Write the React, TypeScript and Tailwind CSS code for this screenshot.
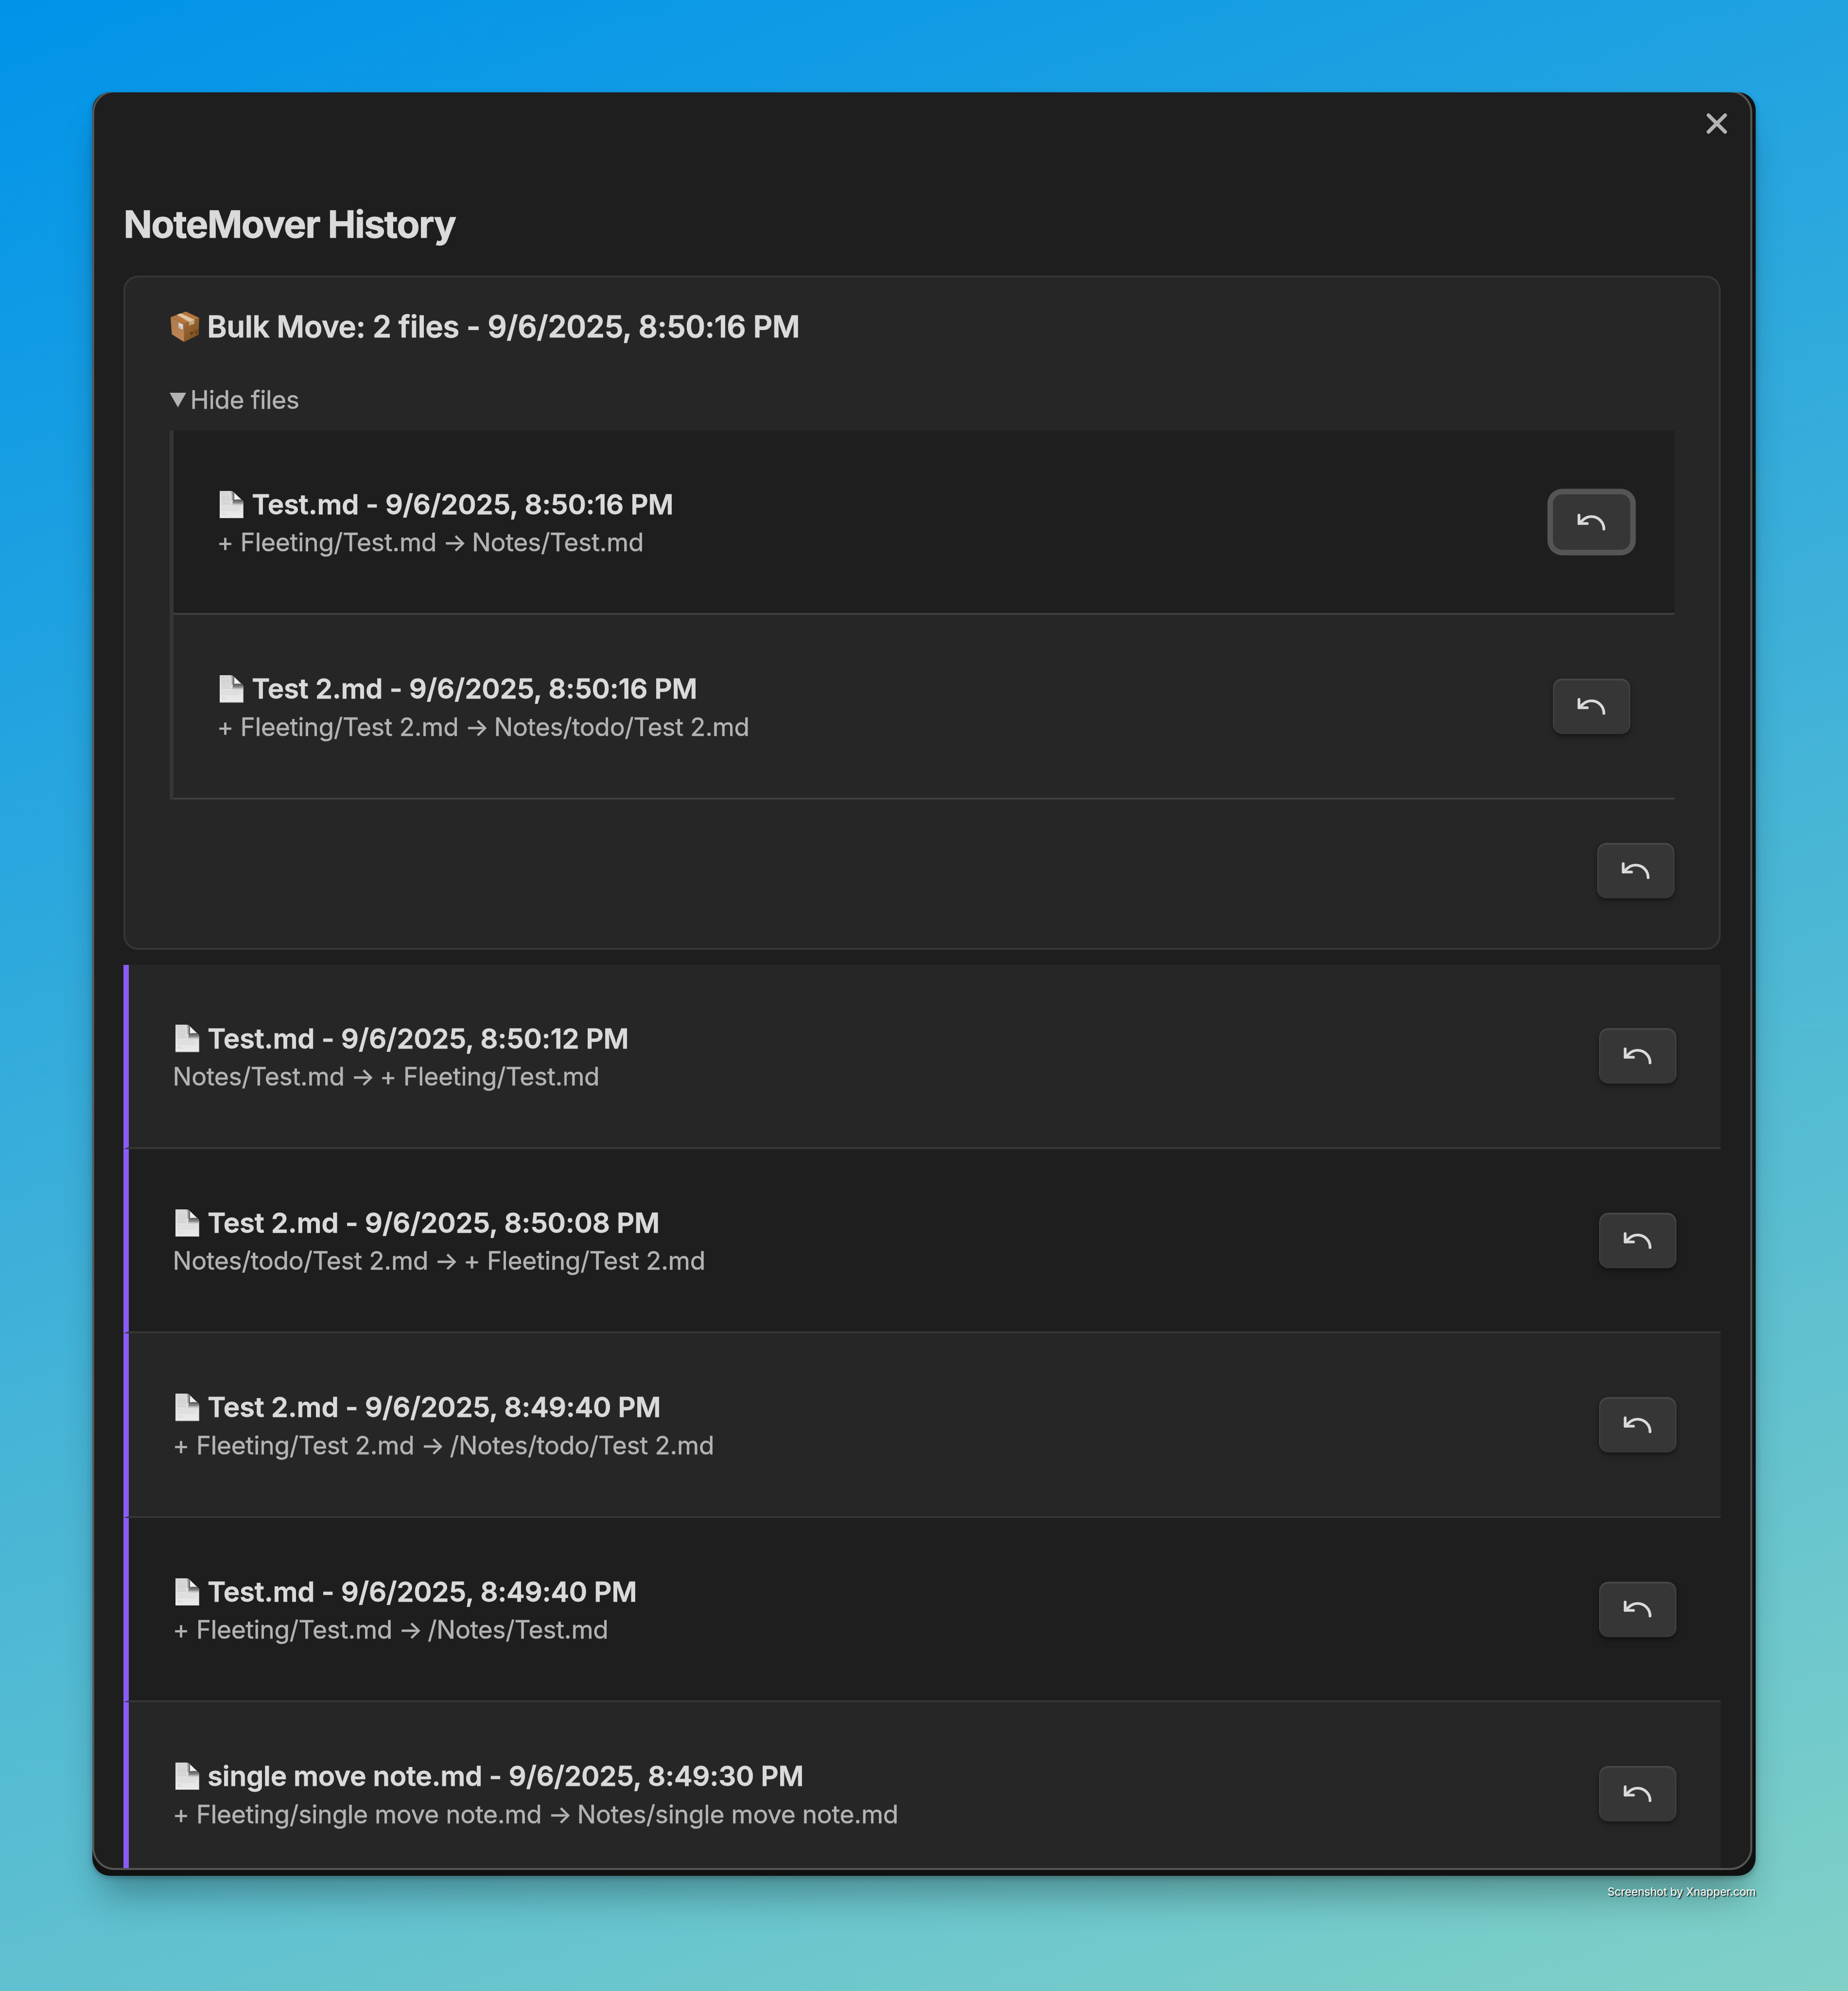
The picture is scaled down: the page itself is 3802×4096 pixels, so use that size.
import type { ReactNode } from "react";

type Move = { name: string; time: string; from: string; to: string };

const bulkFiles: Move[] = [
  { name: "Test.md", time: "9/6/2025, 8:50:16 PM", from: "+ Fleeting/Test.md", to: "Notes/Test.md" },
  { name: "Test 2.md", time: "9/6/2025, 8:50:16 PM", from: "+ Fleeting/Test 2.md", to: "Notes/todo/Test 2.md" },
];

const history: Move[] = [
  { name: "Test.md", time: "9/6/2025, 8:50:12 PM", from: "Notes/Test.md", to: "+ Fleeting/Test.md" },
  { name: "Test 2.md", time: "9/6/2025, 8:50:08 PM", from: "Notes/todo/Test 2.md", to: "+ Fleeting/Test 2.md" },
  { name: "Test 2.md", time: "9/6/2025, 8:49:40 PM", from: "+ Fleeting/Test 2.md", to: "/Notes/todo/Test 2.md" },
  { name: "Test.md", time: "9/6/2025, 8:49:40 PM", from: "+ Fleeting/Test.md", to: "/Notes/Test.md" },
  {
    name: "single move note.md",
    time: "9/6/2025, 8:49:30 PM",
    from: "+ Fleeting/single move note.md",
    to: "Notes/single move note.md",
  },
];

function UndoIcon() {
  return (
    <svg
      viewBox="0 0 24 24"
      className="size-[68.3px]"
      fill="none"
      stroke="currentColor"
      strokeWidth="2"
      strokeLinecap="round"
      strokeLinejoin="round"
    >
      <path d="M3 7v6h6" />
      <path d="M21 17a9 9 0 0 0-9-9 9 9 0 0 0-6 2.3L3 13" />
    </svg>
  );
}

function UndoButton({ focused = false }: { focused?: boolean }) {
  const shadow = focused
    ? "shadow-[0_0_0_11.4px_#555555]"
    : "shadow-[inset_0_1.9px_1.9px_1.9px_rgba(255,255,255,0.09),0_7.6px_15.2px_rgba(0,0,0,0.15),0_3.8px_5.7px_rgba(0,0,0,0.1),0_3.8px_7.6px_rgba(0,0,0,0.2)]";
  return (
    <button
      aria-label="Undo"
      className={`flex h-[113.8px] w-[159.4px] shrink-0 items-center justify-center rounded-[19px] bg-[#363636] text-[#dadada] ${shadow}`}
    >
      <UndoIcon />
    </button>
  );
}

function PackageIcon() {
  return (
    <svg viewBox="30 42 186 198" className="h-[62.6px] w-[58.8px]" role="img" aria-label="Package">
      <defs>
        <linearGradient id="box-left" x1="0" y1="0" x2="0.3" y2="1">
          <stop offset="0" stopColor="#b07a4c" />
          <stop offset="1" stopColor="#bd8455" />
        </linearGradient>
        <linearGradient id="box-right" x1="0" y1="0" x2="0.6" y2="1">
          <stop offset="0" stopColor="#a16a38" />
          <stop offset="1" stopColor="#80541f" />
        </linearGradient>
      </defs>
      <path d="M130 42L216 82L118 122L30 78Z" fill="#b5763f" />
      <path d="M30 78L118 122L118 240L38 190Z" fill="url(#box-left)" />
      <path d="M216 82L118 122L118 240L212 192Z" fill="url(#box-right)" />
      <path d="M70 62L98 54L186 95L150 110Z" fill="#d9c09c" />
      <path d="M84 58L168 102" stroke="#e6d3b5" strokeWidth="5" />
      <path d="M150 109L186 94L184 122L173 127L168 124L150 136Z" fill="#c3a883" />
      <path d="M82 113L109 127L109 159L82 147Z" fill="#d9dcdf" />
      <path d="M86 134L97 140L97 150L86 145Z" fill="#a3a7ab" />
      <path d="M155 178L165 172L168 180L180 165L176 186L165 196Z" fill="#5f3b17" />
      <path d="M188 168L208 158L207 184L188 193Z" fill="#6f471f" />
    </svg>
  );
}

function PageIcon() {
  return (
    <svg viewBox="31 37 154 178" className="h-[56.3px] w-[48.7px]" role="img" aria-label="File">
      <defs>
        <linearGradient id="page-face" x1="0" y1="0" x2="0" y2="1">
          <stop offset="0" stopColor="#d6d6d6" />
          <stop offset="1" stopColor="#ebebeb" />
        </linearGradient>
        <linearGradient id="page-shade" x1="0" y1="0" x2="0" y2="1">
          <stop offset="0" stopColor="#555555" />
          <stop offset="0.5" stopColor="#8a8a8a" />
          <stop offset="1" stopColor="#d8d8d8" stopOpacity="0" />
        </linearGradient>
        <linearGradient id="page-bend" x1="0" y1="0" x2="1" y2="0">
          <stop offset="0" stopColor="#8a8a8a" stopOpacity="0" />
          <stop offset="1" stopColor="#555555" />
        </linearGradient>
      </defs>
      <path d="M31 37H104C112 37 118 42 124 47L178 98C183 104 185 108 185 114V215H31Z" fill="url(#page-face)" />
      <path d="M44 52H66M44 72H98M44 82H100M44 92H98M44 102H100M44 112H98M44 122H104" stroke="#cdcdcd" strokeWidth="5" />
      <path d="M44 143H166M44 153H168M44 163H158M44 182H68M44 191H82" stroke="#d9d9d9" strokeWidth="5" />
      <path d="M98 37H104C112 37 120 44 126 50L126 98H106C111 74 110 52 98 37Z" fill="url(#page-bend)" />
      <path d="M118 92H172C182 99 185 108 185 120L184 138H112Z" fill="url(#page-shade)" />
      <path d="M127 50L166 92C154 89 140 90 127 95Z" fill="#f2f2f2" />
      <rect x="31" y="211" width="154" height="4" fill="#c4c4c4" />
    </svg>
  );
}

function MoveText({ move }: { move: Move }) {
  return (
    <div className="pt-[117px]">
      <div className="flex h-[70px] items-center text-[56.6px] leading-[70px] font-semibold tracking-[-0.0035em] whitespace-nowrap text-[#dadada] [-webkit-text-stroke:0.8px_currentColor]">
        <span className="flex w-[70.2px] shrink-0 pl-[4.2px]">
          <PageIcon />
        </span>
        {move.name} - {move.time}
      </div>
      <div className="mt-[10.3px] -ml-[1.2px] text-[51.5px] leading-[64px] tracking-[-0.005em] whitespace-nowrap text-[#b3b3b3] [-webkit-text-stroke:0.6px_currentColor]">
        {move.from}
        <span className="-mr-[3.4px] -ml-[1px]"> → </span>
        {move.to}
      </div>
    </div>
  );
}

function Row({ className, move, focused }: { className: string; move: Move; focused?: boolean }) {
  return (
    <div className={`flex h-[379.43px] items-start justify-between border-b-4 pr-[91.1px] ${className}`}>
      <MoveText move={move} />
      <div className="pt-[130.9px]">
        <UndoButton focused={focused} />
      </div>
    </div>
  );
}

function BulkCard({ children }: { children: ReactNode }) {
  return (
    <section className="mt-[56.5px] h-[1386.9px] rounded-[30px] border-4 border-[#363636] bg-[#262626] px-[90.9px] pt-[60.6px]">
      {children}
    </section>
  );
}

export default function App() {
  return (
    <div className="h-[4096px] w-[3802px] overflow-hidden bg-[linear-gradient(160deg,#0093E9_0%,#80D0C7_100%)] px-[189.7px] pt-[189.7px] font-['Inter',sans-serif]">
      <div className="h-[3669.2px] w-[3422.6px] rounded-[36px] shadow-[0_57px_76px_-19px_rgba(0,0,0,0.3),0_4px_12px_0_rgba(0,0,0,0.25)]">
        <div className="h-full w-full overflow-hidden rounded-[36px] bg-[#111111]">
          <main className="relative -mt-[4px] h-[3661.8px] w-[3415px] overflow-hidden rounded-[45.5px] border-4 border-[#555555] bg-[#1e1e1e] px-[60.6px]">
            <button aria-label="Close" className="absolute top-[30.1px] right-[34.5px] text-[#b3b3b3]">
              <svg
                viewBox="0 0 24 24"
                className="size-[68.3px]"
                fill="none"
                stroke="currentColor"
                strokeWidth="2.67"
                strokeLinecap="round"
              >
                <path d="M18 6L6 18M6 6l12 12" />
              </svg>
            </button>

            <h1 className="mt-[221.1px] text-[77.2px] leading-[100px] font-bold tracking-[-0.0235em] text-[#dadada] [-webkit-text-stroke:0.9px_currentColor]">
              NoteMover History
            </h1>

            <BulkCard>
              <h2 className="flex h-[80px] items-center text-[61.8px] leading-[80px] font-semibold tracking-[-0.0077em] text-[#dadada] [-webkit-text-stroke:0.9px_currentColor]">
                <span className="flex w-[76.9px] shrink-0 pl-[1.9px]">
                  <PackageIcon />
                </span>
                Bulk Move: 2 files - 9/6/2025, 8:50:16 PM
              </h2>

              <div className="mt-[79.9px] flex h-[60px] items-center text-[51.5px] leading-[60px] tracking-[-0.008em] text-[#b3b3b3] [-webkit-text-stroke:0.6px_currentColor]">
                <span className="w-[42.4px] shrink-0">
                  <svg viewBox="0 0 34 30" className="mt-[2.6px] h-[30px] w-[34px]" fill="currentColor">
                    <path d="M0 0H34L17 30Z" />
                  </svg>
                </span>
                Hide files
              </div>

              <div className="mt-[34.2px] border-l-8 border-[#363636]">
                {bulkFiles.map((move, i) => (
                  <Row
                    key={move.name}
                    move={move}
                    focused={i === 0}
                    className={`border-[#3f3f3f] pl-[90.6px] ${i % 2 === 0 ? "bg-[#1e1e1e]" : "bg-[#262626]"}`}
                  />
                ))}
              </div>

              <div className="mt-[89.2px] flex justify-end">
                <UndoButton />
              </div>
            </BulkCard>

            <div className="mt-[30.4px]">
              {history.map((move, i) => (
                <Row
                  key={move.time + move.name}
                  move={move}
                  className={`border-l-[11px] border-b-[#363636] border-l-[#8a5cf5] pl-[91.5px] ${i % 2 === 0 ? "bg-[#262626]" : "bg-[#1e1e1e]"}`}
                />
              ))}
            </div>
          </main>
        </div>
      </div>

      <div className="mt-[18.4px] text-right text-[22.8px] leading-[30px] text-white [text-shadow:2px_2px_2px_rgba(0,0,0,0.85)]">
        Screenshot by Xnapper.com
      </div>
    </div>
  );
}
